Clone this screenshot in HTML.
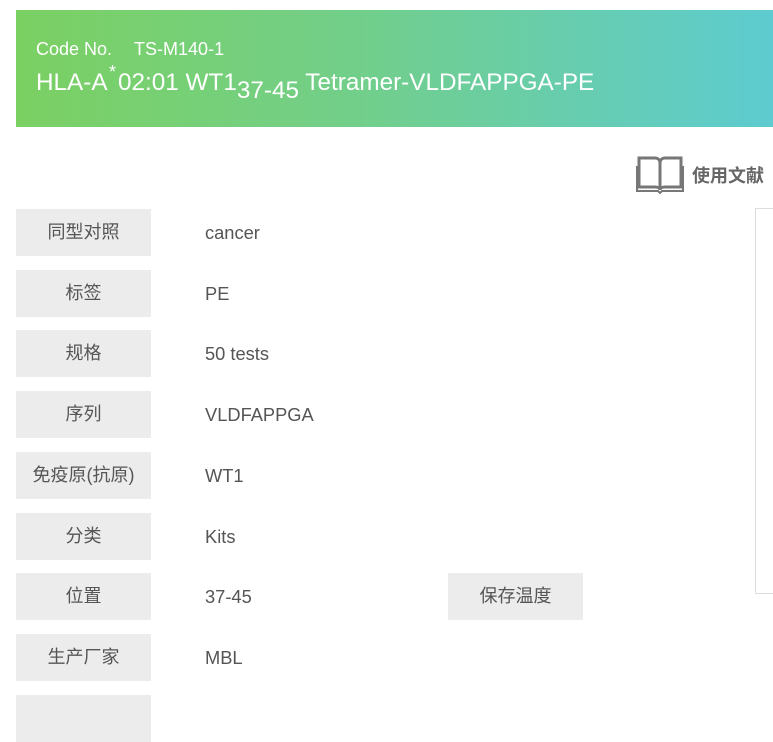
<!DOCTYPE html>
<html><head><meta charset="utf-8"><style>
body{margin:0;width:773px;height:698px;overflow:hidden;background:#fff;font-family:"Liberation Sans","Noto Sans CJK SC",sans-serif;position:relative}
.ban{position:absolute;left:16px;top:10px;width:757px;height:117px;background:linear-gradient(90deg,#7bd062,#72cf8a 45%,#5dcbd0);color:#fff}
.l1{position:absolute;left:20px;top:29px;font-size:18px;white-space:nowrap}
.l2{position:absolute;left:20px;top:59px;font-size:24.3px;white-space:nowrap}
.lab{position:absolute;left:16px;width:135px;height:47px;background:#ececec;color:#555;font-size:18px;line-height:47px;text-align:center}
.val{position:absolute;left:205px;font-size:18.3px;color:#555;line-height:47px}
.panel{position:absolute;left:755px;top:208px;width:30px;height:384px;border:1px solid #ddd}
</style></head><body>
<div class="ban">
<div class="l1">Code No.<span style="display:inline-block;width:22px"></span>TS-M140-1</div>
<div class="l2">HLA-A <span style="position:relative;top:-12px;font-size:18px;margin-left:-4px;margin-right:2px">*</span>02:01 WT1<span style="position:relative;top:8px">37-45</span> Tetramer-VLDFAPPGA-PE</div>
</div>
<svg style="position:absolute;left:636px;top:154px" width="48" height="40" viewBox="0 0 48 40" fill="none" stroke="#777" stroke-width="3"><path d="M3 4h16c3 0 5 2 5 5v27c0-2-2-3-5-3H3z"/><path d="M45 4H29c-3 0-5 2-5 5v27c0-2 2-3 5-3h16z"/><path d="M1 12v25h21l2 2 2-2h21V12" stroke-width="2"/></svg>
<div style="position:absolute;left:692px;top:162px;font-size:18px;font-weight:bold;color:#666">使用文献</div>
<div class="panel"></div>
<div class="lab" style="top:209px">同型对照</div><div class="val" style="top:209px">cancer</div>
<div class="lab" style="top:270px">标签</div><div class="val" style="top:270px">PE</div>
<div class="lab" style="top:330px">规格</div><div class="val" style="top:330px">50 tests</div>
<div class="lab" style="top:391px">序列</div><div class="val" style="top:391px">VLDFAPPGA</div>
<div class="lab" style="top:452px">免疫原(抗原)</div><div class="val" style="top:452px">WT1</div>
<div class="lab" style="top:513px">分类</div><div class="val" style="top:513px">Kits</div>
<div class="lab" style="top:573px">位置</div><div class="val" style="top:573px">37-45</div>
<div class="lab" style="top:573px;left:448px">保存温度</div>
<div class="lab" style="top:634px">生产厂家</div><div class="val" style="top:634px">MBL</div>
<div class="lab" style="top:695px"></div>
</body></html>
